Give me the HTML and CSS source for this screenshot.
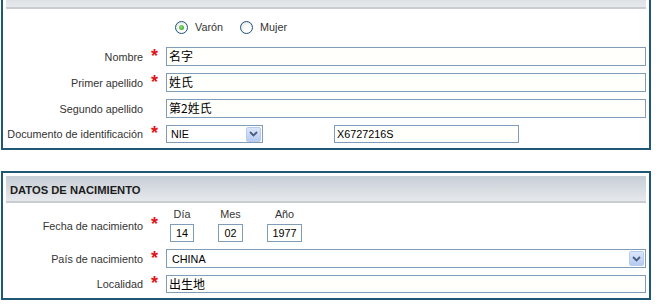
FILE: index.html
```html
<!DOCTYPE html>
<html>
<head>
    <meta charset="UTF-8">
    <link rel="stylesheet" href="styles.css">
</head>
<body>
<div class="panel panel-cut">
    <div class="panel-head"></div>
    <div class="panel-body">
        <div class="row radio-row">
            <span class="radio checked"></span><span class="radio-text">Varón</span>
            <span class="radio"></span><span class="radio-text">Mujer</span>
        </div>
        <div class="row">
            <span class="label">Nombre</span><span class="req">*</span>
            <span class="field cjk">名字</span>
        </div>
        <div class="row">
            <span class="label">Primer apellido</span><span class="req">*</span>
            <span class="field cjk">姓氏</span>
        </div>
        <div class="row">
            <span class="label">Segundo apellido</span><span class="req"></span>
            <span class="field cjk">第2姓氏</span>
        </div>
        <div class="row">
            <span class="label">Documento de identificación</span><span class="req">*</span>
            <span class="select select-small">NIE<span class="arrow"><svg width="9" height="6" viewBox="0 0 9 6"><path d="M1 1 L4.5 4.5 L8 1" fill="none" stroke="#4a5d80" stroke-width="1.8"/></svg></span></span>
            <span class="field field-doc">X6727216S</span>
        </div>
    </div>
</div>

<div class="panel">
    <div class="panel-head">DATOS DE NACIMIENTO</div>
    <div class="panel-body body-birth">
        <div class="row date-row">
            <span class="label">Fecha de nacimiento</span><span class="req">*</span>
            <div class="date-part">
                <span class="date-label">Día</span>
                <span class="field date-day">14</span>
            </div>
            <div class="date-part">
                <span class="date-label">Mes</span>
                <span class="field date-month">02</span>
            </div>
            <div class="date-part">
                <span class="date-label">Año</span>
                <span class="field date-year">1977</span>
            </div>
        </div>
        <div class="row">
            <span class="label">País de nacimiento</span><span class="req">*</span>
            <span class="select select-wide">CHINA<span class="arrow"><svg width="9" height="6" viewBox="0 0 9 6"><path d="M1 1 L4.5 4.5 L8 1" fill="none" stroke="#4a5d80" stroke-width="1.8"/></svg></span></span>
        </div>
        <div class="row">
            <span class="label">Localidad</span><span class="req">*</span>
            <span class="field cjk field-short">出生地</span>
        </div>
    </div>
</div>
</body>
</html>
```

FILE: styles.css
```css
* {
    margin: 0;
    padding: 0;
    box-sizing: border-box;
}

body {
    background-color: #ffffff;
    font-family: "Liberation Sans", Arial, sans-serif;
    font-size: 10.8px;
    color: #333333;
}

.panel {
    width: 650px;
    margin-left: 1px;
    border: 2px solid #1f5876;
    padding: 3px;
}

.panel-cut {
    margin-top: -23px;
    margin-bottom: 21px;
}

.panel-head {
    height: 27px;
    background: linear-gradient(#c7ced5, #e6e9ec);
    border-bottom: 2px solid #c9cdd1;
    padding-left: 4px;
    line-height: 28px;
    font-size: 11.2px;
    font-weight: bold;
    color: #1c1c1c;
}

.panel-body {
    padding: 9px 0 2px 0;
}

.body-birth {
    padding-top: 4px;
}

.row {
    display: flex;
    align-items: center;
    margin-bottom: 7px;
}

.row:last-child {
    margin-bottom: 0;
}

.label {
    width: 137px;
    text-align: right;
    white-space: nowrap;
}

.req {
    width: 23px;
    text-align: center;
    color: #e0141b;
    font-size: 18px;
    font-weight: bold;
    line-height: 10px;
    position: relative;
    top: -1px;
}

.field {
    flex: 1;
    height: 19px;
    border: 1px solid #7f9db9;
    background-color: #fffffb;
    color: #000000;
    padding: 0 3px;
    line-height: 17px;
    white-space: nowrap;
}

.cjk {
    font-family: "Noto Sans CJK SC", sans-serif;
    font-size: 12px;
    line-height: 16px;
    padding-left: 2px;
}

.field-short {
    height: 18px;
}

/* radios */
.radio-row {
    height: 18px;
    padding-left: 169px;
    margin-bottom: 11px;
}

.radio {
    width: 13px;
    height: 13px;
    border: 1px solid #1c5180;
    border-radius: 50%;
    background: radial-gradient(circle at 60% 65%, #ffffff 30%, #dcdcd4 100%);
    position: relative;
}

.radio.checked::after {
    content: "";
    position: absolute;
    left: 3px;
    top: 3px;
    width: 5px;
    height: 5px;
    border-radius: 50%;
    background: radial-gradient(circle at 40% 40%, #8be07c, #2a9a1a);
}

.radio-text {
    margin-left: 7px;
    margin-right: 17px;
}

/* selects */
.select {
    display: flex;
    align-items: center;
    justify-content: space-between;
    border: 1px solid #7f9db9;
    background-color: #ffffff;
    color: #000000;
    padding: 0 1px 0 4px;
}

.select-small {
    width: 97px;
    height: 18px;
}

.select-wide {
    flex: 1;
    height: 19px;
    padding-left: 5px;
}

.arrow {
    width: 15px;
    height: 15px;
    display: flex;
    align-items: center;
    justify-content: center;
    border: 1px solid #b8cbef;
    border-radius: 2px;
    background: linear-gradient(#dbe6fb, #b6cbf3);
}

.field-doc {
    flex: none;
    width: 185px;
    height: 18px;
    margin-left: 71px;
    padding-left: 2px;
}

/* date */
.date-row {
    align-items: flex-end;
}

.date-row .label {
    align-self: center;
    margin-top: 2px;
}

.date-row .req {
    align-self: center;
}

.date-part {
    display: flex;
    flex-direction: column;
    align-items: center;
    margin-right: 24px;
}

.date-label {
    height: 17px;
    line-height: 14px;
}

.date-part .field {
    flex: none;
    height: 18px;
    line-height: 16px;
    text-align: center;
}

.date-day {
    width: 24px;
}

.date-month {
    width: 25px;
}

.date-year {
    width: 35px;
}

.date-part:first-of-type {
    margin-left: 4px;
}
```
